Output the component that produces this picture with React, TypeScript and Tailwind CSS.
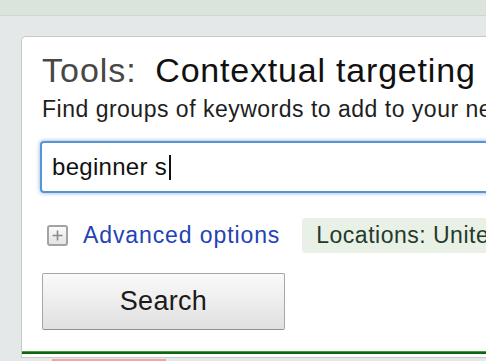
import React from "react";

function PlusBox() {
  return (
    <div className="w-[21px] h-[21px] shrink-0 rounded-[3px] border-2 border-[#a3a3a3] bg-gradient-to-b from-[#fbfbfb] to-[#e4e4e4] flex items-center justify-center">
      <svg width="13" height="13" viewBox="0 0 13 13">
        <path d="M6.5 1.5 V11.5 M1.5 6.5 H11.5" stroke="#8a8a8a" strokeWidth="1.6" fill="none" />
      </svg>
    </div>
  );
}

export default function App() {
  return (
    <div className="w-[486px] h-[361px] overflow-hidden bg-[#e5e8e8] flex flex-col font-['Liberation_Sans',Arial,sans-serif]">
      <div className="h-[16px] shrink-0 bg-[#dae3dc] border-b border-[#d0d7d3]" />
      <div className="flex-1 pl-[21px] pt-[20px] flex flex-col">
        <div className="w-[520px] shrink-0 bg-white border-l border-t border-b border-[#c9c9c9] rounded-tl-[5px] flex flex-col">
          <div className="pl-[20px] pt-[13px] flex flex-col">
            <div className="h-[40px] leading-[40px] text-[34px] whitespace-nowrap">
              <span className="text-[#474747] tracking-[1px]">Tools:</span>
              <span className="text-[#111111]"> </span>
              <span className="ml-[9px] text-[#111111] tracking-[0.8px]">Contextual targeting</span>
            </div>
            <div className="mt-[5px] h-[28px] leading-[28px] text-[23px] tracking-[0.5px] text-[#1e1e1e] whitespace-nowrap">
              Find groups of keywords to add to your new ad group
            </div>
            <div className="mt-[18px] -ml-[2px] w-[480px] h-[52px] border-2 border-[#5595d4] rounded-[4px] shadow-[0_0_4px_rgba(80,140,210,0.7)] bg-white flex items-center pl-[10px] text-[24px] tracking-[0.3px] text-[#111111] whitespace-nowrap">
              <span>beginner s</span>
              <span className="inline-block w-[2px] h-[25px] bg-[#111111] ml-[2px]" />
            </div>
            <div className="mt-[25px] h-[35px] flex items-center whitespace-nowrap">
              <div className="ml-[5px]">
                <PlusBox />
              </div>
              <span className="ml-[15px] text-[23px] leading-[35px] tracking-[0.9px] text-[#2343b5]">Advanced options</span>
              <div className="ml-[22px] h-[35px] shrink-0 rounded-[4px] bg-[#e9f1e6] pl-[14px] pr-[20px] flex items-center text-[23px] leading-[35px] tracking-[0.5px] text-[#243a2b]">
                Locations: United States; Languages: English
              </div>
            </div>
            <div className="mt-[20px] w-[243px] h-[57px] rounded-[2px] border border-[#a7a7a7] border-b-[#8f8f8f] bg-gradient-to-b from-[#fafafa] to-[#e0e0e0] flex items-center justify-center text-[27px] tracking-[0.3px] text-[#1a1a1a]">
              Search
            </div>
          </div>
          <div className="mt-[21px] h-[3px] bg-[#0f650f] border-t border-[#3c9f3c]" />
          <div className="h-[3px]" />
        </div>
        <div className="mt-[1px] ml-[31px] w-[114px] h-[3px] bg-[#f0a6a6]" />
      </div>
    </div>
  );
}
